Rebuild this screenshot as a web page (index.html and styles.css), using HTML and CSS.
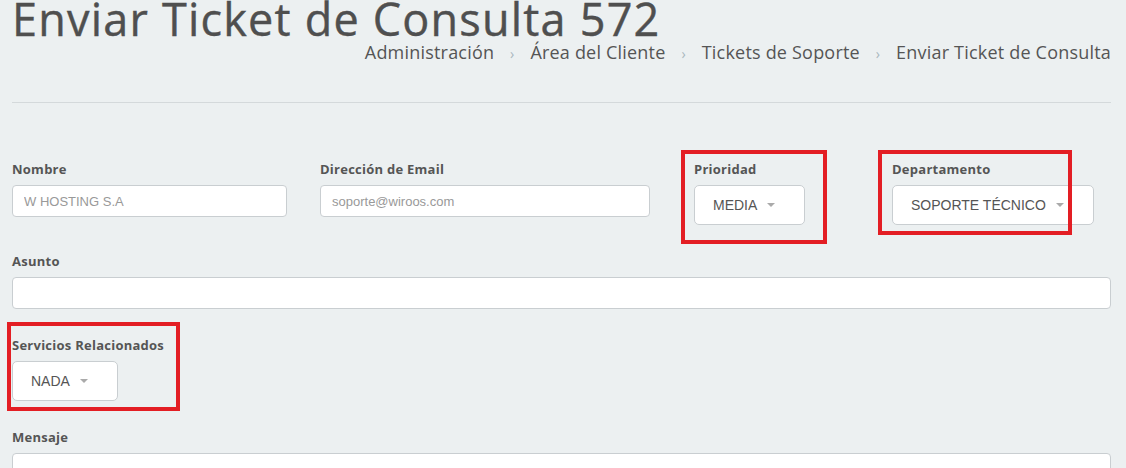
FILE: index.html
```html
<!DOCTYPE html>
<html lang="es">
<head>
    <meta charset="UTF-8">
    <meta name="viewport" content="width=device-width, initial-scale=1.0">
    <title>Enviar Ticket de Consulta</title>
    <link rel="stylesheet" href="styles.css">
</head>
<body>

    <!-- Page header -->
    <h1 class="page-title">Enviar Ticket de Consulta 572</h1>
    <div class="breadcrumb">
        <a href="#">Administración</a>
        <span class="sep">›</span>
        <a href="#">Área del Cliente</a>
        <span class="sep">›</span>
        <a href="#">Tickets de Soporte</a>
        <span class="sep">›</span>
        <span class="current">Enviar Ticket de Consulta</span>
    </div>
    <hr class="divider">

    <form class="ticket-form">
        <div class="row row-top">
            <div class="field">
                <label for="name">Nombre</label>
                <input type="text" id="name" class="input input-name" placeholder="W HOSTING S.A" disabled>
            </div>
            <div class="field">
                <label for="email">Dirección de Email</label>
                <input type="text" id="email" class="input input-email" placeholder="soporte@wiroos.com" disabled>
            </div>
            <div class="field marked">
                <label>Prioridad</label>
                <div class="dropdown">MEDIA <span class="caret"></span></div>
                <span class="mark mark-priority"></span>
            </div>
            <div class="field marked">
                <label>Departamento</label>
                <div class="dropdown">SOPORTE TÉCNICO <span class="caret"></span></div>
                <span class="mark mark-department"></span>
            </div>
        </div>

        <div class="field">
            <label for="subject">Asunto</label>
            <input type="text" id="subject" class="input input-full">
        </div>

        <div class="field marked">
            <label>Servicios Relacionados</label>
            <div class="dropdown">NADA <span class="caret"></span></div>
            <span class="mark mark-services"></span>
        </div>

        <div class="field">
            <label for="message">Mensaje</label>
            <textarea id="message" class="input input-full message"></textarea>
        </div>
    </form>

</body>
</html>
```

FILE: styles.css
```css
/* Global Styles */
body {
    margin: 0;
    padding: 0 15px 0 12px;
    background: #ecf0f1;
    font-family: 'Open Sans', sans-serif;
    color: #555;
    overflow: hidden;
}

/* Header */
.page-title {
    font-size: 45px;
    font-weight: 400;
    line-height: 44px;
    letter-spacing: 1.2px;
    margin: -3px 0 0;
    color: #4f4f4f;
    -webkit-text-stroke: 0.4px #4f4f4f;
}

.breadcrumb {
    text-align: right;
    font-size: 18px;
    line-height: 24px;
    letter-spacing: 0.2px;
    margin-top: -1px;
    color: #555;
}

.breadcrumb a {
    color: #555;
    text-decoration: none;
}

.breadcrumb .sep {
    color: #a8b6bd;
    font-size: 14px;
    margin: 0 11px;
}

.divider {
    border: none;
    border-top: 1px solid #d4d9db;
    margin: 36px 0 57px;
}

/* Form */
.row-top {
    display: grid;
    grid-template-columns: 308px 374px 198px 1fr;
}

.field {
    margin-bottom: 27px;
}

.marked {
    position: relative;
}

label {
    display: block;
    font-size: 13px;
    font-weight: 700;
    line-height: 18px;
    letter-spacing: 0.25px;
    margin: 0 0 7px;
    color: #555;
}

.input {
    display: block;
    box-sizing: border-box;
    height: 32px;
    padding: 0 11px;
    border: 1px solid #c9ced1;
    border-radius: 4px;
    background: #fff;
    font-family: 'Liberation Sans', Arial, sans-serif;
    font-size: 13px;
    color: #555;
}

.input::placeholder {
    color: #999;
}

.input-name {
    width: 275px;
}

.input-email {
    width: 330px;
}

.input-full {
    width: 100%;
}

.message {
    height: 120px;
    resize: none;
}

.dropdown {
    display: inline-flex;
    align-items: center;
    box-sizing: border-box;
    height: 40px;
    padding: 0 29px 0 18px;
    border: 1px solid #c9ced1;
    border-radius: 5px;
    background: #fff;
    font-family: 'Liberation Sans', Arial, sans-serif;
    font-size: 14px;
    color: #555;
}

.caret {
    width: 0;
    height: 0;
    margin-left: 10px;
    border-left: 4px solid transparent;
    border-right: 4px solid transparent;
    border-top: 4px solid #aaa;
}

/* Red annotation boxes */
.mark {
    position: absolute;
    border: 4px solid #e31e24;
    box-sizing: border-box;
    pointer-events: none;
}

.mark-priority {
    left: -13px;
    top: -10px;
    width: 146px;
    height: 94px;
}

.mark-department {
    left: -14px;
    top: -10px;
    width: 194px;
    height: 85px;
}

.mark-services {
    left: -5px;
    top: -14px;
    width: 173px;
    height: 89px;
}
```
